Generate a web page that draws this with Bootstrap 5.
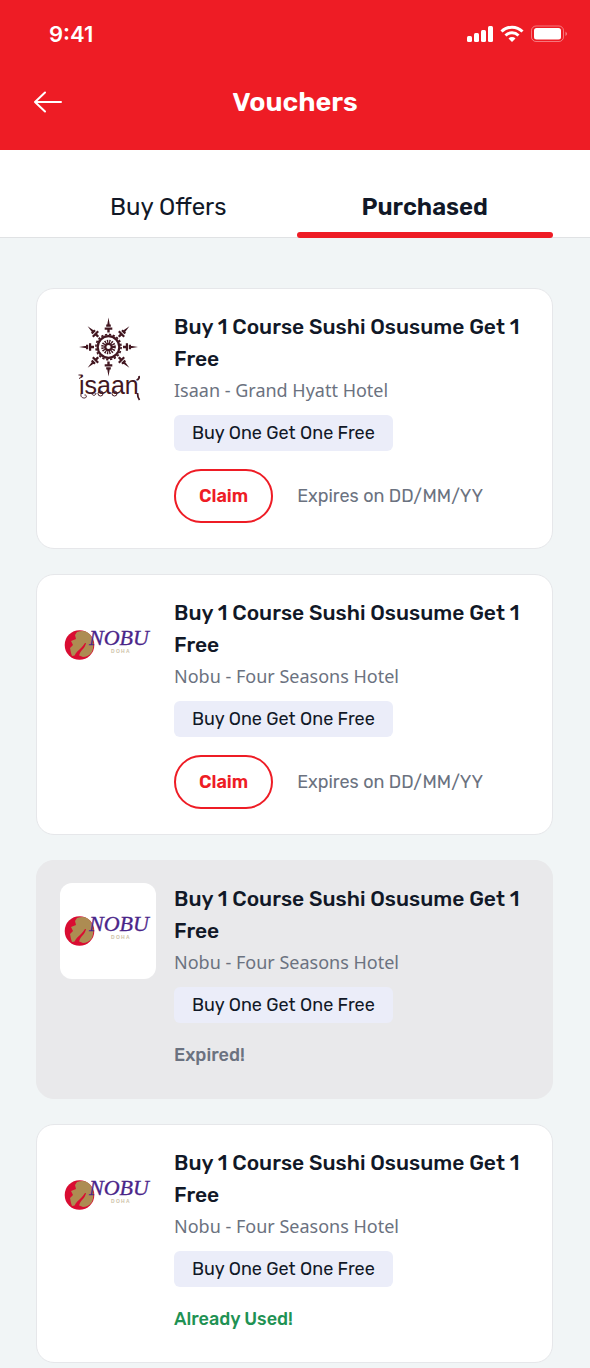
<!DOCTYPE html>
<html lang="en">
<head>
<meta charset="utf-8">
<meta name="viewport" content="width=device-width, initial-scale=1">
<title>Vouchers</title>
<link rel="stylesheet" href="https://cdn.jsdelivr.net/npm/bootstrap@5.3.0/dist/css/bootstrap.min.css">
<style>
  :root { --brand: #ee1c25; --ink: #111827; --muted: #6b7280; }
  body { font-family: Rubik, Roboto, sans-serif; color: var(--ink); background: #f1f5f6; }
  .app-header { background: var(--brand); padding-bottom: 14px; }
  .status-bar { height: 68px; padding: 0 22px 0 49px; }
  .clock { font: 600 22px/28px Inter, sans-serif; }
  .title-bar { height: 68px; padding: 0 34px; display: grid; grid-template-columns: 28px 1fr 28px; align-items: center; }
  .page-title { font-size: 27px; line-height: 36px; font-weight: 600; }
  .tab-strip { padding: 26px 37px 0 40px; background: #fff; box-shadow: inset 0 -1px #e0e2e4; height: 88px; }
  .tab-link { color: var(--ink); font-size: 24px; line-height: 62px; height: 62px; text-align: center; text-decoration: none; position: relative; }
  .tab-link.active { font-weight: 600; }
  .tab-link.active::after { content: ""; position: absolute; left: 0; right: 0; bottom: 0; height: 6px; border-radius: 3px; background: var(--brand); }
  .voucher-list { padding: 50px 37px 24px 36px; gap: 25px; }
  .voucher { border: 1px solid #e6e7ea; border-radius: 18px; padding: 22px 23px 25px; gap: 18px; background: #fff; }
  .voucher.expired { background: #e9e9eb; border-color: #e9e9eb; }
  .brand-logo { width: 96px; height: 96px; border-radius: 12px; background: #fff; }
  .offer-title { font-size: 21px; line-height: 32px; font-weight: 500; }
  .venue { font: 400 18px/30px "Noto Sans", sans-serif; color: var(--muted); }
  .offer-tag { background: #ebedf9; border-radius: 6px; font-size: 18px; line-height: 36px; padding: 0 18px; margin-top: 10px; }
  .offer-foot { margin-top: 18px; gap: 24px; font-size: 18px; }
  .claim { height: 54px; padding: 0 23px; font-size: 18px; line-height: 28px; font-weight: 600; color: var(--brand); border: 2px solid var(--brand); border-radius: 27px; background: #fff; }
  .claim:hover { background: var(--brand); border-color: var(--brand); color: #fff; }
  .expiry { color: var(--muted); }
  .state { font-size: 18px; line-height: 28px; font-weight: 500; margin: 18px 0 4px; color: var(--muted); }
  .state.used { color: #1f9254; }
</style>
</head>
<body>
<svg width="0" height="0" class="position-absolute" aria-hidden="true">
  <defs>
    <path id="ray" fill="#421721" d="M0-29.500 1.300-22h-2.600zM-2.300-22.500h4.600v2.200h-4.600zM-3.800-19.500h7.600v2.200h-7.600zM-1.200-17.500h2.400v3h-2.400z"/>
    <symbol id="isaan" viewBox="0 0 96 96">
      <g transform="translate(48.500 36)">
        <use href="#ray"/><use href="#ray" transform="rotate(45)"/><use href="#ray" transform="rotate(90)"/><use href="#ray" transform="rotate(135)"/>
        <use href="#ray" transform="rotate(180)"/><use href="#ray" transform="rotate(225)"/><use href="#ray" transform="rotate(270)"/><use href="#ray" transform="rotate(315)"/>
        <circle r="12.600" fill="none" stroke="#421721" stroke-width="1.600" stroke-dasharray="2.300 1.658"/>
        <circle r="10.800" fill="none" stroke="#421721" stroke-width="2.200"/>
        <circle r="5.300" fill="none" stroke="#421721" stroke-width="4" stroke-dasharray="1.200 .881"/>
        <circle r="3.200" fill="none" stroke="#421721" stroke-width="2.200"/>
      </g>
      <text x="19" y="83" font-family="Liberation Sans" font-size="25" fill="#421721">isaan</text>
      <g fill="none" stroke="#421721" stroke-width="1">
        <path d="M18.500 64h4M19 67.500l3-1.500M21.500 82c-1.500 3 0 5 3 5 2.500 0 2.500-3.500 0-3M36 82c0 3-4 3-4 .5 0-1.500 2-1.500 2 0"/>
        <circle cx="40.500" cy="82.500" r="2.500"/><circle cx="54.500" cy="82.500" r="2.500"/>
        <path d="M76.500 69c2-.5 3-2 2.500-4M77.500 82c0 3 .5 5 2 7" stroke-width="1.800"/>
      </g>
    </symbol>
    <symbol id="nobu" viewBox="0 0 96 96">
      <circle cx="19.500" cy="48" r="14.800" fill="#d90d32"/>
      <path d="M17 35c6-2 11-1 14 4 3 5 3 11 1 16-3 4-6 5-9 5l-5-2-6 1-1-3-1-5 3-3-2-4 5-2-1-4z" fill="#ad8c52"/>
      <path d="M26 46c-1 6-6 7-7 13l-5 2c1-7 7-8 11-15z" fill="#d90d32"/>
      <text x="29" y="48" font-family="Liberation Serif" font-style="italic" font-size="22" fill="#4a2589" stroke="#4a2589" stroke-width=".3">NOBU</text>
      <text y="56" font-family="Liberation Sans" font-size="5" font-weight="700" fill="#cdc2a8" x="51 56 61 66">DOHA</text>
    </symbol>
  </defs>
</svg>

<header class="app-header text-white">
  <div class="status-bar d-flex align-items-center justify-content-between">
    <span class="clock">9:41</span>
    <svg width="101" height="18" viewBox="0 0 101 18" fill="#fff" aria-hidden="true">
      <rect x="0" y="11" width="5" height="6" rx="1.500"/><rect x="7" y="8" width="5" height="9" rx="1.500"/><rect x="14" y="5" width="5" height="12" rx="1.500"/><rect x="21" y="1" width="5" height="16" rx="1.500"/>
      <g fill="none" stroke="#fff" stroke-width="3"><path d="M34.500 6.500a15 15 0 0 1 21 0M38.500 10.500a9.300 9.300 0 0 1 13 0"/></g>
      <path d="M41.500 13.500a5 5 0 0 1 7 0L45 17z"/>
      <rect x="64.500" y="1" width="32" height="15.500" rx="4.500" fill="none" stroke="#fff" stroke-opacity=".4"/>
      <rect x="67" y="3" width="27" height="11.500" rx="2.500"/>
      <path d="M98.500 6.500q3 2.300 0 4.600z" opacity=".45"/>
    </svg>
  </div>
  <div class="title-bar">
    <a href="#" class="d-flex text-white" aria-label="Back">
      <svg width="28" height="22" viewBox="0 0 28 22" fill="none" stroke="currentColor" stroke-width="2" stroke-linecap="round" stroke-linejoin="round"><path d="M27 11H1M11 1.500 1 11l10 9.500"/></svg>
    </a>
    <h1 class="page-title text-center m-0">Vouchers</h1>
  </div>
</header>

<nav class="tab-strip d-flex" aria-label="Voucher lists">
  <a class="tab-link col-6" href="#">Buy Offers</a>
  <a class="tab-link col-6 active" href="#" aria-current="page">Purchased</a>
</nav>

<main class="voucher-list d-flex flex-column">
  <article class="voucher d-flex align-items-start">
    <svg class="brand-logo flex-shrink-0" role="img" aria-label="Isaan"><use href="#isaan"/></svg>
    <div class="flex-grow-1">
      <h2 class="offer-title m-0">Buy 1 Course Sushi Osusume Get 1 Free</h2>
      <p class="venue m-0">Isaan - Grand Hyatt Hotel</p>
      <div class="d-flex"><span class="offer-tag">Buy One Get One Free</span></div>
      <div class="offer-foot d-flex align-items-center"><button type="button" class="btn claim">Claim</button><span class="expiry">Expires on DD/MM/YY</span></div>
    </div>
  </article>
  <article class="voucher d-flex align-items-start">
    <svg class="brand-logo flex-shrink-0" role="img" aria-label="Nobu Doha"><use href="#nobu"/></svg>
    <div class="flex-grow-1">
      <h2 class="offer-title m-0">Buy 1 Course Sushi Osusume Get 1 Free</h2>
      <p class="venue m-0">Nobu - Four Seasons Hotel</p>
      <div class="d-flex"><span class="offer-tag">Buy One Get One Free</span></div>
      <div class="offer-foot d-flex align-items-center"><button type="button" class="btn claim">Claim</button><span class="expiry">Expires on DD/MM/YY</span></div>
    </div>
  </article>
  <article class="voucher expired d-flex align-items-start">
    <svg class="brand-logo flex-shrink-0" role="img" aria-label="Nobu Doha"><use href="#nobu"/></svg>
    <div class="flex-grow-1">
      <h2 class="offer-title m-0">Buy 1 Course Sushi Osusume Get 1 Free</h2>
      <p class="venue m-0">Nobu - Four Seasons Hotel</p>
      <div class="d-flex"><span class="offer-tag">Buy One Get One Free</span></div>
      <p class="state">Expired!</p>
    </div>
  </article>
  <article class="voucher d-flex align-items-start">
    <svg class="brand-logo flex-shrink-0" role="img" aria-label="Nobu Doha"><use href="#nobu"/></svg>
    <div class="flex-grow-1">
      <h2 class="offer-title m-0">Buy 1 Course Sushi Osusume Get 1 Free</h2>
      <p class="venue m-0">Nobu - Four Seasons Hotel</p>
      <div class="d-flex"><span class="offer-tag">Buy One Get One Free</span></div>
      <p class="state used">Already Used!</p>
    </div>
  </article>
</main>
<script src="https://cdn.jsdelivr.net/npm/bootstrap@5.3.0/dist/js/bootstrap.bundle.min.js"></script>
</body>
</html>
